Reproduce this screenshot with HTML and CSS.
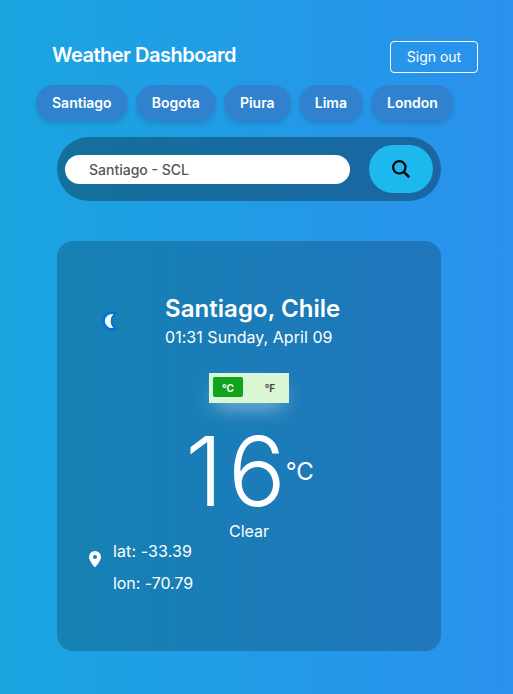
FILE: index.html
```html
<!DOCTYPE html>
<html lang="en">
<head>
<meta charset="utf-8">
<title>Weather Dashboard</title>
<link rel="stylesheet" href="styles.css">
</head>
<body>
<header class="header">
  <h1 class="brand">Weather Dashboard</h1>
  <button class="signout">Sign out</button>
</header>
<nav class="cities">
  <button class="city">Santiago</button>
  <button class="city">Bogota</button>
  <button class="city">Piura</button>
  <button class="city">Lima</button>
  <button class="city">London</button>
</nav>
<div class="search">
  <div class="field">Santiago - SCL</div>
  <button class="go" aria-label="Search">
    <svg width="18" height="18" viewBox="0 0 18 18" fill="none" stroke="#000" stroke-width="2.2"><circle cx="7.300" cy="7.300" r="6.200"/><path d="M11.800 11.800L17.200 17.200" stroke-width="2.500"/></svg>
  </button>
</div>
<main class="card">
  <div class="place">
    <svg class="moon" width="20" height="22" viewBox="0 0 20 22"><path d="M17 2.800A10 10 0 1 0 17 19.200A9 9 0 0 1 17 2.800Z" fill="#0b6fd6"/><path d="M12.500 4.200A7 7 0 1 0 12.500 17.800C8.800 14.500 8.800 7.500 12.500 4.200Z" fill="#f4ffff"/></svg>
    <div>
      <h2 class="name">Santiago, Chile</h2>
      <p class="date">01:31 Sunday, April 09</p>
    </div>
  </div>
  <div class="units"><button class="unit active">°C</button><button class="unit">°F</button></div>
  <div class="temp"><span class="value">16</span><span class="degree">°C</span></div>
  <p class="condition">Clear</p>
  <div class="coords">
    <svg class="pin" width="12" height="16" viewBox="0 0 12 16"><path fill="#fff" fill-rule="evenodd" d="M6 0a6 6 0 0 1 6 6c0 3-3.500 7.500-5.200 9.600a1 1 0 0 1-1.600 0C3.500 13.500 0 9 0 6a6 6 0 0 1 6-6zm0 4a2 2 0 1 0 0 4 2 2 0 0 0 0-4z"/></svg>
    <div><p class="lat">lat: -33.39</p><p class="lon">lon: -70.79</p></div>
  </div>
</main>
</body>
</html>
```
FILE: styles.css
```css
* { box-sizing: border-box; margin: 0; padding: 0; }
body {
  height: 694px;
  overflow: hidden;
  font-family: Inter, sans-serif;
  font-size: 16px;
  line-height: 24px;
  color: #fff;
  background: linear-gradient(90deg, #1aa5e0, #2a91ed);
}
button { font: inherit; color: inherit; border: 0; background: none; }
svg { display: block; flex: none; }
.header { display: flex; justify-content: space-between; padding: 41px 35px 0 52px; }
.brand { font-size: 20px; line-height: 28px; font-weight: 600; letter-spacing: -0.5px; }
.signout { width: 88px; height: 32px; border: 1px solid #fff; border-radius: 4px; font-size: 14px; line-height: 20px; }
.cities { display: flex; gap: 8.1px; padding: 12px 0 0 36px; }
.city { height: 36px; padding: 0 16px; border-radius: 18px; background: #3182ce; font-size: 14px; font-weight: 600; box-shadow: 0 4px 6px -1px rgba(0,0,0,.1), 0 2px 4px -1px rgba(0,0,0,.06); }
.search { display: flex; align-items: center; justify-content: space-between; width: 384px; height: 64px; margin: 16px 0 0 57px; padding: 8px; border-radius: 32px; background: rgba(0,0,0,.31); }
.field { width: 285px; height: 29px; padding-left: 24px; border-radius: 15px; background: #fff; color: #555; font-size: 14px; line-height: 29px; font-weight: 500; }
.go { display: flex; align-items: center; justify-content: center; width: 64px; height: 48px; border-radius: 24px; background: #1db8ee; }
.card { display: flex; flex-direction: column; width: 384px; height: 410px; margin: 40px 0 0 57px; padding-top: 52px; border-radius: 16px; background: rgba(0,0,0,.2); }
.place { display: flex; align-items: center; gap: 44px; padding-left: 44px; }
.name { font-size: 24px; line-height: 32px; font-weight: 600; letter-spacing: .05px; }
.date { letter-spacing: .04px; }
.units { display: flex; justify-content: space-between; align-self: center; width: 80px; height: 30px; margin-top: 24px; padding: 4px; background: #d9f7d4; box-shadow: 0 10px 20px -6px rgba(255,255,255,.5); }
.unit { width: 30px; height: 20px; padding-top: 1px; border-radius: 2px; font-size: 10px; line-height: 20px; font-weight: 700; color: #4a4a4a; }
.active { background: #11a31c; color: #fff; }
.temp { display: flex; align-items: center; justify-content: center; height: 96px; margin-top: 20px; padding-left: 1px; }
.value { margin-right: -5px; font-size: 96px; line-height: 96px; font-weight: 300; letter-spacing: 5px; }
.degree { padding-top: 1px; font-size: 24px; line-height: 32px; }
.condition { text-align: center; }
.coords { display: flex; gap: 12px; align-items: flex-start; margin-top: -8px; padding-left: 32px; line-height: 32px; }
.pin { margin-top: 16px; }
.lat { letter-spacing: .12px; }
.lon { letter-spacing: -.06px; }
```
